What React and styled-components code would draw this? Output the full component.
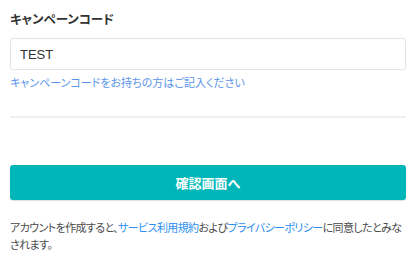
import React, { useState } from 'react'
import styled, { createGlobalStyle } from 'styled-components'

const GlobalStyle = createGlobalStyle`
  body {
    margin: 0;
    background: #fff;
    font-family: 'Noto Sans CJK JP', 'Noto Sans', sans-serif;
    color: #333;
  }
`

const Page = styled.div`
  width: 396px;
  padding: 10px 4px 0 10px;
  font-feature-settings: 'palt';
`

const Field = styled.div`
  display: flex;
  flex-direction: column;
`

const Label = styled.label`
  font-size: 12.5px;
  font-weight: 700;
  line-height: 18px;
  color: #333;
  margin-bottom: 10px;
`

const Input = styled.input`
  box-sizing: border-box;
  height: 32px;
  width: 100%;
  border: 1px solid #dfe4e6;
  border-radius: 3px;
  padding: 0 9px;
  font-family: 'Liberation Sans', Arial, sans-serif;
  font-size: 13px;
  color: #333;
  outline: none;
`

const Hint = styled.p`
  margin: 4px 0 0;
  font-size: 11px;
  line-height: 16px;
  color: #5a95ea;
`

const Divider = styled.hr`
  border: 0;
  border-top: 2px solid #efefef;
  margin: 26px 0 47px;
`

const SubmitButton = styled.button`
  width: 100%;
  height: 35px;
  border: 0;
  border-radius: 3px;
  background: #00b6b9;
  box-shadow: 0 1px 1px rgba(0, 0, 0, 0.12);
  color: #fff;
  font-family: inherit;
  font-size: 13px;
  font-weight: 700;
  cursor: pointer;
`

const Terms = styled.p`
  margin: 19px 0 0;
  font-size: 11px;
  line-height: 17px;
  letter-spacing: -0.6px;
  color: #4a4a4a;
`

const Link = styled.a`
  color: #2b8ef0;
  text-decoration: none;
`

const App = () => {
  const [code, setCode] = useState('TEST')

  return (
    <>
      <GlobalStyle />
      <Page>
        <Field>
          <Label htmlFor="campaign">キャンペーンコード</Label>
          <Input id="campaign" value={code} onChange={e => setCode(e.target.value)} />
          <Hint>キャンペーンコードをお持ちの方はご記入ください</Hint>
        </Field>
        <Divider />
        <SubmitButton type="button">確認画面へ</SubmitButton>
        <Terms>
          アカウントを作成すると、<Link href="#">サービス利用規約</Link>および
          <Link href="#">プライバシーポリシー</Link>に同意したとみなされます。
        </Terms>
      </Page>
    </>
  )
}

export default App
